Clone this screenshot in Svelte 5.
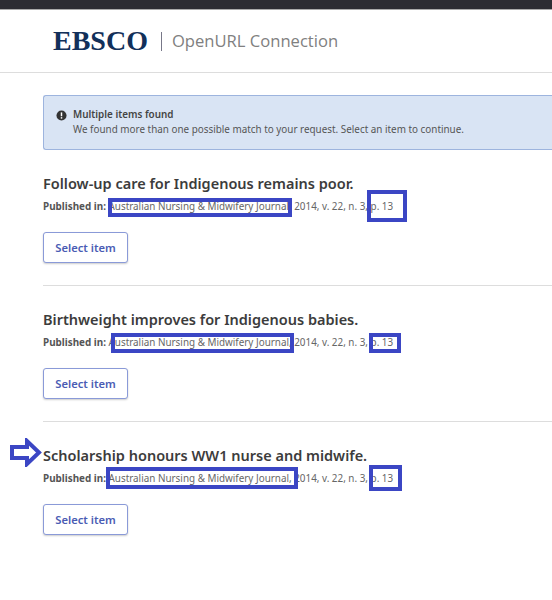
<script>
  const items = [
    { title: 'Follow-up care for Indigenous remains poor.', journal: [108, 198, 184, 19], page: [367, 190, 40, 32] },
    { title: 'Birthweight improves for Indigenous babies.', journal: [111, 333, 183, 20], page: [369, 333, 32, 20] },
    { title: 'Scholarship honours WW1 nurse and midwife.', journal: [106, 467, 192, 22], page: [369, 465, 33, 26] }
  ];
</script>

<div class="top"></div>
<header>
  <span class="logo">EBSCO</span>
  <span class="sep"></span>
  <span class="product">OpenURL Connection</span>
</header>

<main>
  <div class="notice">
    <svg class="info" viewBox="0 0 12 12" width="11" height="11">
      <circle cx="6" cy="6" r="5.5" fill="#333" />
      <rect x="5.2" y="2.6" width="1.6" height="4.2" fill="#fff" />
      <rect x="5.2" y="7.8" width="1.6" height="1.6" fill="#fff" />
    </svg>
    <div>
      <strong>Multiple items found</strong>
      <p>We found more than one possible match to your request. Select an item to continue.</p>
    </div>
  </div>

  {#each items as item, i}
    <section class:last={i === items.length - 1}>
      <h2>{item.title}</h2>
      <p class="meta">
        <b>Published in:</b> Australian Nursing &amp; Midwifery Journal, 2014, v. 22, n. 3, p. 13
      </p>
      <button>Select item</button>
    </section>
  {/each}
</main>

<!-- hand-drawn annotations laid over the screenshot -->
{#each items as item}
  <div class="mark" style="left:{item.journal[0]}px;top:{item.journal[1]}px;width:{item.journal[2]}px;height:{item.journal[3]}px"></div>
  <div class="mark" style="left:{item.page[0]}px;top:{item.page[1]}px;width:{item.page[2]}px;height:{item.page[3]}px"></div>
{/each}
<svg class="arrow" viewBox="0 0 32 29" width="32" height="29">
  <path d="M2 9 H17 V3 L29 14.5 L17 26 V20 H2 Z" fill="#fff" stroke="#3b46c4" stroke-width="4" />
</svg>

<style>
  :global(body) {
    margin: 0;
    background: #fff;
    font-family: "Noto Sans", sans-serif;
    color: #444;
    overflow: hidden;
  }

  .top {
    height: 9px;
    background: #2d2d33;
    border-bottom: 1px solid #aaa;
  }

  header {
    height: 62px;
    display: flex;
    align-items: center;
    padding-left: 53px;
    border-bottom: 1px solid #ddd;
  }

  .logo {
    font-family: "Liberation Serif", serif;
    font-weight: 700;
    font-size: 28px;
    color: #12305a;
  }

  .sep {
    width: 1px;
    height: 19px;
    background: #778;
    margin: 1px 10px 0 13px;
  }

  .product {
    font-family: "Open Sans", sans-serif;
    font-size: 16.6px;
    color: #808080;
    margin-bottom: 2px;
  }

  main {
    padding: 22px 0 0 43px;
  }

  .notice {
    display: flex;
    gap: 6px;
    height: 55px;
    box-sizing: border-box;
    padding: 11px 12px 0;
    background: #d9e4f4;
    border: 1px solid #9db4de;
    border-right: 0;
    border-radius: 3px 0 0 3px;
    font-size: 9.9px;
    line-height: 15px;
  }

  .info {
    margin-top: 3px;
    flex: none;
  }

  .notice strong {
    font-weight: 600;
  }

  .notice p {
    margin: 0;
    color: #555;
  }

  section {
    height: 136px;
    box-sizing: border-box;
    padding-top: 23px;
    border-bottom: 1px solid #ddd;
  }

  section.last {
    border: 0;
  }

  h2 {
    margin: 0;
    font-size: 14.5px;
    line-height: 20px;
    font-weight: 600;
    color: #3c3c3c;
  }

  .meta {
    margin: 6px 0 19px;
    font-size: 9.9px;
    line-height: 14px;
    color: #666;
  }

  .meta b {
    font-weight: 700;
    color: #555;
  }

  button {
    display: block;
    width: 85px;
    height: 31px;
    background: #fff;
    border: 1px solid #8a9ad8;
    border-radius: 3px;
    box-shadow: 0 1px 2px #ccc;
    font-family: inherit;
    font-size: 11.2px;
    font-weight: 600;
    color: #4a5cb4;
    padding: 0;
  }

  .mark {
    position: absolute;
    box-sizing: border-box;
    border: 4px solid #3b46c4;
  }

  .arrow {
    position: absolute;
    left: 10px;
    top: 438px;
  }
</style>
